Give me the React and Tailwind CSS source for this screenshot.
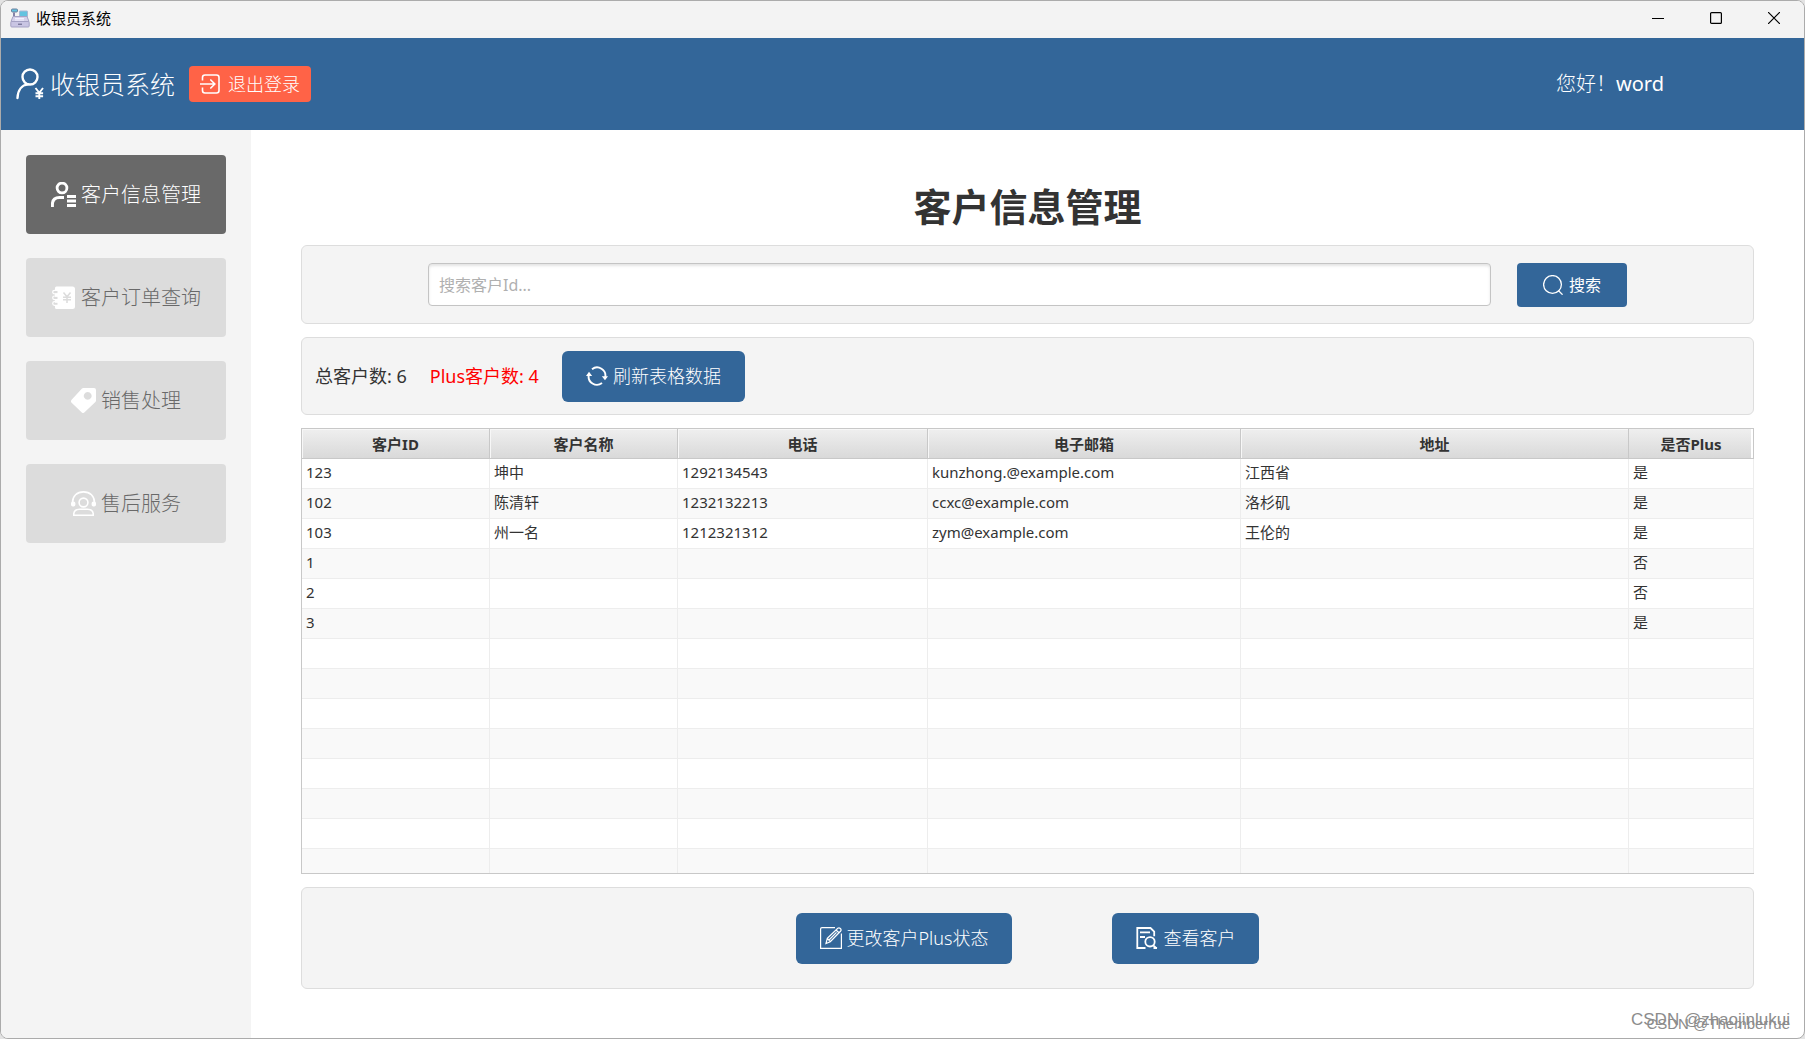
import { useState } from 'react';
import clsx from 'clsx';

const COLUMNS = [
  { key: 'id', label: '客户ID', width: 'w-[188px]' },
  { key: 'name', label: '客户名称', width: 'w-[188px]' },
  { key: 'phone', label: '电话', width: 'w-[250px]' },
  { key: 'email', label: '电子邮箱', width: 'w-[313px]' },
  { key: 'address', label: '地址', width: 'w-[388px]' },
  { key: 'plus', label: '是否Plus', width: 'w-[125px]' },
];

const CUSTOMERS = [
  { id: '123', name: '坤中', phone: '1292134543', email: 'kunzhong.@example.com', address: '江西省', plus: '是' },
  { id: '102', name: '陈清轩', phone: '1232132213', email: 'ccxc@example.com', address: '洛杉矶', plus: '是' },
  { id: '103', name: '州一名', phone: '1212321312', email: 'zym@example.com', address: '王伦的', plus: '是' },
  { id: '1', plus: '否' },
  { id: '2', plus: '否' },
  { id: '3', plus: '是' },
];

const ROW_COUNT = 14; // empty rows fill the rest of the table

function RegisterIcon() {
  return (
    <svg width="20" height="20" viewBox="0 0 20 20" fill="none" stroke="#8583a8">
      <path d="M4 4.5v6" strokeWidth="2" />
      <rect x="1.5" y="1" width="6" height="3" rx="1" fill="#63c3e0" stroke="#6d7f9c" />
      <rect x="9.5" y="3" width="8" height="6" rx="0.5" fill="#63c3e0" stroke="#a9b6d4" />
      <path d="M3 8.5h14l2 5H1z" fill="#d6d2ea" stroke="#a5a2c4" />
      <path d="M5 10.5h9M5 12h9" stroke="#f2f0ff" />
      <rect x="0.8" y="13.5" width="18.4" height="5.5" rx="1" fill="#c9c5e3" stroke="#a5a2c4" />
      <path d="M8 16.2h4" stroke="#5e5b80" />
    </svg>
  );
}

function CashierIcon() {
  return (
    <svg width="28" height="32" viewBox="0 0 28 32" fill="none" stroke="currentColor">
      <circle cx="14" cy="9" r="7.5" strokeWidth="2.4" />
      <path d="M1.5 30C1.8 22 6 17 12 16.4" strokeWidth="2.4" strokeLinecap="round" />
      <path d="M19.5 20l3.8 4.8L27 20M23.3 24.8V31M19.5 25.2h7.6M19.5 28.2h7.6" strokeWidth="1.9" />
    </svg>
  );
}

function LogoutIcon() {
  return (
    <svg width="20" height="20" viewBox="0 0 20 20" fill="none" stroke="currentColor" strokeWidth="1.6">
      <path d="M2.5 6.5V3.4Q2.5 1 5 1h11.5Q19 1 19 3.4v13.2Q19 19 16.5 19H5Q2.5 19 2.5 16.6v-3.1" />
      <path d="M0 10h14.5M10.3 5.5l4.500 4.500-4.500 4.500" />
    </svg>
  );
}

function CustomerIcon() {
  return (
    <svg width="25" height="25" viewBox="0 0 25 25" fill="none" stroke="currentColor">
      <circle cx="11" cy="6" r="4.9" strokeWidth="2.8" />
      <path d="M1.4 25v-2.500Q1.4 15.4 8.500 15.4h4.500" strokeWidth="3" />
      <path d="M16 14.5h9M16 19h9M16 23.5h9" strokeWidth="3" />
    </svg>
  );
}

function OrderIcon() {
  return (
    <svg width="25" height="25" viewBox="0 0 25 25" fill="none" stroke="currentColor">
      <path
        fill="currentColor"
        stroke="none"
        d="M4 3q0-1.500 1.500-1.500h16Q24 1.500 24 4v17.500q0 2.500-2.500 2.500h-16Q4 24 4 22.500V20h2.500v-2.200H4v-3.300h2.500v-2.800H4V8.500h2.500V6H4z"
      />
      <path
        d="M8 5.300H3.500a1.800 1.800 0 0 0 0 3.600H8M8 11H3.500a1.800 1.800 0 0 0 0 3.600H8M8 16.700H3.500a1.800 1.800 0 0 0 0 3.600H8"
        strokeWidth="1.2"
      />
      <path d="M12.500 7.500l3.500 4.300 3.500-4.300M16 11.800V18M12 12.200h8M12 14.800h8" stroke="#dcdcdc" strokeWidth="1.5" />
    </svg>
  );
}

function TagIcon() {
  return (
    <svg width="25" height="25" viewBox="0 0 25 25" fill="currentColor">
      <path
        fillRule="evenodd"
        d="M12.300 0H23q2 0 2 2v10.500q0 .8-.6 1.400L13.300 24.600q-1.300.9-2.500 0L.4 14.600q-.9-1.300 0-2.500L11 .6q.6-.6 1.300-.6zM16.700 4a3.900 3.900 0 1 0 .01 0z"
      />
    </svg>
  );
}

function ServiceIcon() {
  return (
    <svg width="25" height="25" viewBox="0 0 25 25" fill="none" stroke="currentColor" strokeWidth="1.6">
      <path d="M1.500 11.500C1.500 5 6 .9 12.500 .9S23.500 5 23.500 11.500" />
      <rect x="0.8" y="11.2" width="2.8" height="3.600" rx="1" fill="currentColor" />
      <rect x="21.4" y="11.2" width="2.8" height="3.600" rx="1" fill="currentColor" />
      <circle cx="12.5" cy="11.5" r="4.4" />
      <path d="M2.800 24.200v-1.700q.6-4.300 5.700-4.300h8q5.100 0 5.700 4.300v1.700z" />
    </svg>
  );
}

function SearchIcon() {
  return (
    <svg width="20" height="20" viewBox="0 0 20 20" fill="none" stroke="currentColor" strokeWidth="1.3">
      <circle cx="9.5" cy="9.5" r="8.9" />
      <path d="M15.300 15.500l4.300 4.200" />
    </svg>
  );
}

function RefreshIcon() {
  return (
    <svg width="22" height="20" viewBox="0 0 22 20" fill="none" stroke="currentColor" strokeWidth="1.9">
      <path d="M6 3.200a8.300 8.300 0 0 1 13.200 8.300M16 17a8.300 8.300 0 0 1-13.200-8.300" />
      <path d="M15.800 10.300h6.200L19 14.300zM0 9.900h6.200L3 5.800z" fill="currentColor" stroke="none" />
    </svg>
  );
}

function EditIcon() {
  return (
    <svg width="22" height="22" viewBox="0 0 22 22" fill="none" stroke="currentColor" strokeWidth="1.2">
      <path d="M15 .6H2Q.6 .6 .6 2v19.400h20.800V6.500" />
      <path d="M6 16.500l1.300-5.200L17.800 1.200q1.300-.9 2.600.3 1.200 1.300.3 2.500L10.300 14.700zM7.300 11.300l3 3.400M16 3l3 2.800M9 13l7.500-7.600" />
    </svg>
  );
}

function ViewIcon() {
  return (
    <svg width="22" height="22" viewBox="0 0 22 22" fill="none" stroke="currentColor" strokeWidth="1.8">
      <path d="M9.500 21H1.300V1h13.200l3.700 3.700v4.500M4 5.300h10M4 10h5" />
      <circle cx="14" cy="14.8" r="4.7" />
      <path d="M17.200 18.300l3.500 3.200M17.500 21h3.500" />
    </svg>
  );
}

const MENU = [
  { label: '客户信息管理', Icon: CustomerIcon },
  { label: '客户订单查询', Icon: OrderIcon },
  { label: '销售处理', Icon: TagIcon },
  { label: '售后服务', Icon: ServiceIcon },
];

function TitleBar() {
  const control = 'flex h-full w-[58px] items-center justify-center';
  return (
    <div className="flex h-[37px] shrink-0 items-center justify-between bg-[#f3f3f3] pr-px pb-1 pl-[9px] text-black">
      <div className="flex items-center gap-1.5">
        <RegisterIcon />
        <span className="text-[15px] leading-5">收银员系统</span>
      </div>
      <div className="flex h-full">
        <button aria-label="最小化" className={control}>
          <svg width="12" height="12" stroke="currentColor"><path d="M0 6.500h12" /></svg>
        </button>
        <button aria-label="最大化" className={control}>
          <svg width="12" height="12" fill="none" stroke="currentColor" strokeWidth="1.2">
            <rect x="0.6" y="0.6" width="10.8" height="10.8" rx="1" />
          </svg>
        </button>
        <button aria-label="关闭" className={control}>
          <svg width="12" height="12" stroke="currentColor" strokeWidth="1.2"><path d="M0 0l12 12M12 0L0 12" /></svg>
        </button>
      </div>
    </div>
  );
}

function Panel({ className, children }) {
  return (
    <section className={clsx('flex shrink-0 items-center rounded-md border border-[#dddddd] bg-[#f4f4f4]', className)}>
      {children}
    </section>
  );
}

function ActionButton({ icon, children }) {
  return (
    <button className="flex h-[51px] items-center gap-[5px] rounded-md bg-[#336699] px-6 text-[18px] leading-6 font-light text-white">
      {icon}
      {children}
    </button>
  );
}

function CustomerTable() {
  const rows = Array.from({ length: ROW_COUNT }, (_, i) => CUSTOMERS[i] || {});
  return (
    <div className="min-h-0 flex-1 overflow-hidden border-y border-l border-[#c8c8c8]">
      <table className="w-full table-fixed border-separate border-spacing-0 text-[15px] leading-5">
        <thead>
          <tr className="h-[30px]">
            {COLUMNS.map((col) => (
              <th
                key={col.key}
                className={clsx(
                  'border-r border-b border-[#c8c8c8] bg-linear-to-b from-[#efefef] to-[#d9d9d9] p-0 font-bold shadow-[inset_1px_1px_0_#f7f7f7] last:shadow-[inset_-2px_0_0_#ffffff]',
                  col.width,
                )}
              >
                {col.label}
              </th>
            ))}
          </tr>
        </thead>
        <tbody>
          {rows.map((row, i) => (
            <tr key={i} className="h-[30px] odd:bg-white even:bg-[#f9f9f9]">
              {COLUMNS.map((col) => (
                <td key={col.key} className="truncate border-r border-b border-[#ededed] px-1 pt-0 pb-1">
                  {row[col.key]}
                </td>
              ))}
            </tr>
          ))}
        </tbody>
      </table>
    </div>
  );
}

export default function App() {
  const [active, setActive] = useState('客户信息管理');
  const [keyword, setKeyword] = useState('');

  return (
    <div className="h-screen bg-[#e3e3e3] font-['Noto_Sans','Noto_Sans_CJK_SC',sans-serif] text-[#333333]">
      <div className="relative flex h-full flex-col overflow-hidden rounded-lg border border-[#ababab] bg-white">
        <TitleBar />

        <header className="flex h-[92px] shrink-0 items-center bg-[#336699] pr-[140px] pl-[15px] font-light text-white">
          <CashierIcon />
          <span className="ml-1.5 text-[25px] leading-8">收银员系统</span>
          <button className="ml-[14px] flex h-9 items-center gap-2 rounded bg-[#ff6347] px-[11px] text-[18px] leading-6">
            <LogoutIcon />
            退出登录
          </button>
          <span className="ml-auto text-[20px] leading-7">
            您好！<span className="font-normal">word</span>
          </span>
        </header>

        <div className="flex min-h-0 flex-1">
          <nav className="flex w-[250px] shrink-0 flex-col gap-6 bg-[#f4f4f4] p-[25px]">
            {MENU.map(({ label, Icon }) => (
              <button
                key={label}
                onClick={() => setActive(label)}
                className={clsx(
                  'flex h-[79px] items-center justify-center gap-[5px] rounded text-[20px] leading-7 font-light',
                  active === label ? 'bg-[#696969] text-white' : 'bg-[#dcdcdc] text-[#696969]',
                )}
              >
                <span className="text-white"><Icon /></span>
                {label}
              </button>
            ))}
          </nav>

          <main className="flex min-w-0 flex-1 flex-col gap-[13px] px-[50px] pt-[50px] pb-[49px]">
            <h1 className="shrink-0 text-center text-[38px] leading-[52px] font-bold">客户信息管理</h1>

            <Panel className="h-[79px] justify-center gap-[26px] px-[126px]">
              <input
                type="text"
                aria-label="搜索客户Id"
                placeholder="搜索客户Id..."
                value={keyword}
                onChange={(e) => setKeyword(e.target.value)}
                className="h-[43px] min-w-0 flex-1 rounded border border-[#c4c4c4] bg-white px-2.5 text-[16px] leading-6 shadow-[inset_0_2px_3px_#e4e4e4] placeholder:text-[#b0b0b0]"
              />
              <button className="flex h-11 items-center gap-1.5 rounded bg-[#336699] px-[26px] text-[16px] leading-6 text-white">
                <SearchIcon />
                搜索
              </button>
            </Panel>

            <Panel className="h-[78px] gap-[23px] px-[13px] text-[18px] leading-6">
              <span>总客户数: 6</span>
              <span className="text-[#ff0000]">Plus客户数: 4</span>
              <ActionButton icon={<RefreshIcon />}>刷新表格数据</ActionButton>
            </Panel>

            <CustomerTable />

            <Panel className="h-[102px] justify-center gap-[100px]">
              <ActionButton icon={<EditIcon />}>更改客户Plus状态</ActionButton>
              <ActionButton icon={<ViewIcon />}>查看客户</ActionButton>
            </Panel>
          </main>
        </div>

        {/* Watermarks */}
        <span className="pointer-events-none absolute right-3.5 bottom-2 font-['Liberation_Sans',sans-serif] text-[17px] leading-5 text-[#8c8c8c]">
          CSDN @zhaojinlukui
        </span>
        <span className="pointer-events-none absolute right-3.5 bottom-1 font-['Liberation_Sans',sans-serif] text-[15px] leading-5 text-[#8c8c8c]">
          CSDN @Themberrue
        </span>
      </div>
    </div>
  );
}
